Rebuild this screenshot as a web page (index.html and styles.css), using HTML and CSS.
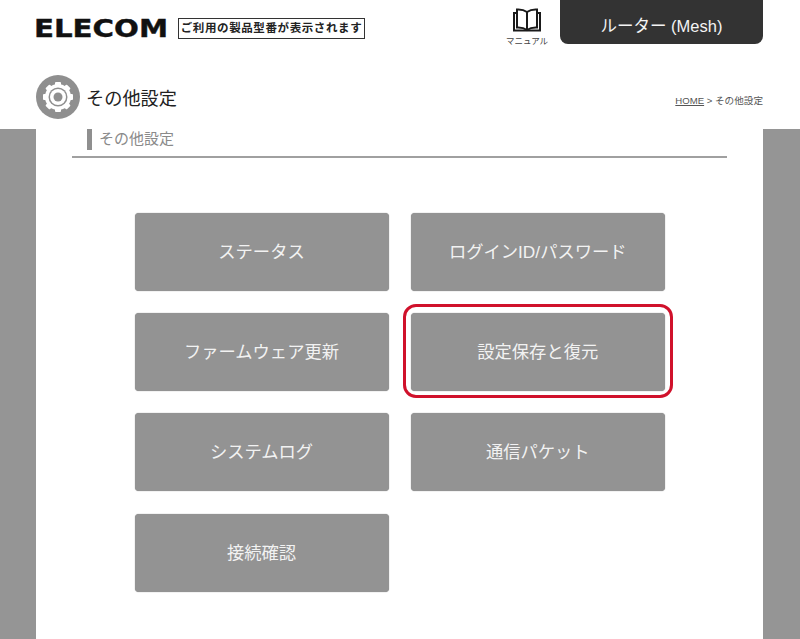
FILE: index.html
```html
<!DOCTYPE html>
<html lang="ja">
<head>
    <meta charset="UTF-8">
    <meta name="viewport" content="width=device-width, initial-scale=1.0">
    <title>その他設定</title>
    <link rel="stylesheet" href="styles.css">
</head>
<body>
    <div class="header">
        <div class="top-row">
            <div class="logo"><span class="logo-text">ELECOM</span></div>
            <div class="model-note">ご利用の製品型番が表示されます</div>
            <div class="manual">
                <svg class="manual-icon" viewBox="0 0 30 24" width="30" height="24" fill="none" stroke="#1a1a1a" stroke-width="2">
                    <path d="M15 4C12 1.8 8.500 1.300 5 1.500V19.500C8.500 19.300 12 19.800 15 22C18 19.800 21.500 19.300 25 19.500V1.500C21.500 1.300 18 1.800 15 4Z"/>
                    <path d="M15 4V22"/>
                    <path d="M5 5H2V22.500H28V5H25"/>
                </svg>
                <span class="manual-label">マニュアル</span>
            </div>
            <div class="product-tab">ルーター (Mesh)</div>
        </div>
        <div class="title-row">
            <div class="title-icon">
                <svg viewBox="0 0 44 44" width="44" height="44">
                    <g fill="#ffffff">
                        <circle cx="22" cy="22" r="13"/>
                        <rect x="19" y="7" width="6" height="30" rx="1"/>
                        <rect x="19" y="7" width="6" height="30" rx="1" transform="rotate(45 22 22)"/>
                        <rect x="19" y="7" width="6" height="30" rx="1" transform="rotate(90 22 22)"/>
                        <rect x="19" y="7" width="6" height="30" rx="1" transform="rotate(135 22 22)"/>
                    </g>
                    <circle cx="22" cy="22" r="9.500" fill="#8f8f8f"/>
                    <circle cx="22" cy="22" r="8" fill="#ffffff"/>
                    <circle cx="22" cy="22" r="4.500" fill="#8f8f8f"/>
                </svg>
            </div>
            <h1 class="page-title">その他設定</h1>
            <div class="breadcrumb"><span class="crumb-home">HOME</span> &gt; その他設定</div>
        </div>
    </div>

    <div class="main">
        <div class="content">
            <div class="section-title"><span>その他設定</span></div>
            <div class="menu-grid">
                <div class="menu-button">ステータス</div>
                <div class="menu-button">ログインID/パスワード</div>
                <div class="menu-button">ファームウェア更新</div>
                <div class="menu-button selected">設定保存と復元</div>
                <div class="menu-button">システムログ</div>
                <div class="menu-button">通信パケット</div>
                <div class="menu-button">接続確認</div>
            </div>
        </div>
    </div>
</body>
</html>
```

FILE: styles.css
```css
html, body {
    margin: 0;
    padding: 0;
}
body {
    font-family: "Liberation Sans", "Noto Sans CJK JP", sans-serif;
    background-color: #ffffff;
    color: #222222;
    width: 800px;
    height: 639px;
    overflow: hidden;
}
.header {
    height: 129px;
    background-color: #ffffff;
    box-sizing: border-box;
    padding: 0 37px 0 36px;
}
.top-row {
    display: flex;
    align-items: flex-start;
    height: 75px;
}
.logo {
    flex: none;
    width: 132px;
    height: 20px;
    margin-top: 19px;
}
.logo-text {
    display: inline-block;
    font-family: "DejaVu Sans", sans-serif;
    font-weight: bold;
    font-size: 25px;
    line-height: 20px;
    color: #111111;
    -webkit-text-stroke: 0.4px #111111;
    transform: translateX(-2px) scaleX(1.17);
    transform-origin: left center;
}
.model-note {
    flex: none;
    width: 187px;
    height: 21px;
    margin: 18px 0 0 10px;
    box-sizing: border-box;
    border: 1px solid #333333;
    font-size: 11.500px;
    font-weight: bold;
    line-height: 19px;
    text-align: center;
    white-space: nowrap;
    letter-spacing: 0.6px;
}
.manual {
    flex: none;
    width: 50px;
    margin: 8px 0 0 137px;
    display: flex;
    flex-direction: column;
    align-items: center;
}
.manual-icon {
    display: block;
}
.manual-label {
    font-size: 8.500px;
    line-height: 12px;
    margin-top: 3px;
    white-space: nowrap;
    color: #444444;
}
.product-tab {
    flex: none;
    width: 203px;
    height: 44px;
    margin-left: 8px;
    background-color: #333333;
    border-radius: 0 0 8px 8px;
    color: #f4f4f4;
    font-size: 16.500px;
    line-height: 52px;
    text-align: center;
}
.title-row {
    display: flex;
    align-items: center;
    height: 44px;
}
.title-icon {
    width: 44px;
    height: 44px;
    border-radius: 50%;
    background-color: #8f8f8f;
}
.title-icon svg {
    display: block;
}
.page-title {
    margin: 0 0 0 6px;
    font-size: 18.200px;
    font-weight: normal;
    color: #222222;
}
.breadcrumb {
    margin-left: auto;
    margin-top: 6px;
    font-size: 9.600px;
    color: #555555;
}
.crumb-home {
    text-decoration: underline;
}
.main {
    height: 510px;
    background-color: #959595;
    padding: 0 37px 0 36px;
}
.content {
    height: 510px;
    background-color: #ffffff;
    padding: 0 36px;
}
.section-title {
    height: 27px;
    border-bottom: 2px solid #a0a0a0;
    padding-left: 15px;
}
.section-title span {
    display: block;
    height: 21px;
    border-left: 5px solid #8f8f8f;
    padding-left: 7px;
    font-size: 15px;
    line-height: 20px;
    color: #8a8a8a;
}
.menu-grid {
    display: grid;
    grid-template-columns: 254px 254.500px;
    grid-auto-rows: 78px;
    column-gap: 22px;
    row-gap: 22.200px;
    padding: 55px 0 0 62.500px;
}
.menu-button {
    position: relative;
    background-color: #939393;
    border-radius: 4px;
    box-shadow: 0 0 1px #777777;
    color: #f2f2f2;
    font-size: 17.300px;
    text-align: center;
    line-height: 79px;
    white-space: nowrap;
}
.selected::after {
    content: "";
    position: absolute;
    top: -9px;
    left: -8px;
    right: -8px;
    bottom: -7px;
    border: 3px solid #d0112b;
    border-radius: 13px;
}
```
